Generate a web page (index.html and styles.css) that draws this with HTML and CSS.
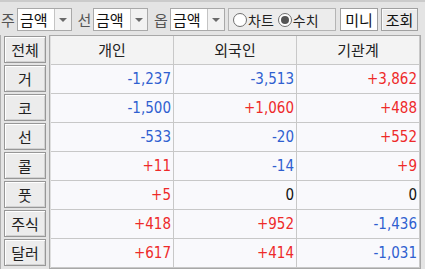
FILE: index.html
```html
<!DOCTYPE html>
<html lang="ko">
<head>
  <meta charset="UTF-8">
  <title>투자자별 매매동향</title>
  <link rel="stylesheet" href="styles.css">
</head>
<body>
  <div class="toolbar">
    <span class="lbl">주</span>
    <div class="combo"><span class="combo-text">금액</span><span class="combo-arrow"></span></div>
    <span class="lbl lbl-mid">선</span>
    <div class="combo"><span class="combo-text">금액</span><span class="combo-arrow"></span></div>
    <span class="lbl lbl-opt">옵</span>
    <div class="combo"><span class="combo-text">금액</span><span class="combo-arrow"></span></div>

    <div class="radio-box">
      <label class="radio"><span class="dot"></span>차트</label>
      <label class="radio"><span class="dot on"></span>수치</label>
    </div>

    <button class="btn btn-mini">미니</button>
    <button class="btn btn-query">조회</button>
  </div>

  <div class="board">
    <div class="side">
      <button class="side-btn">전체</button>
      <button class="side-btn">거</button>
      <button class="side-btn">코</button>
      <button class="side-btn">선</button>
      <button class="side-btn">콜</button>
      <button class="side-btn">풋</button>
      <button class="side-btn">주식</button>
      <button class="side-btn">달러</button>
    </div>

    <div class="grid">
      <div class="cell head">개인</div>
      <div class="cell head">외국인</div>
      <div class="cell head">기관계</div>

      <div class="cell num down">-1,237</div>
      <div class="cell num down">-3,513</div>
      <div class="cell num up">+3,862</div>

      <div class="cell num down">-1,500</div>
      <div class="cell num up">+1,060</div>
      <div class="cell num up">+488</div>

      <div class="cell num down">-533</div>
      <div class="cell num down">-20</div>
      <div class="cell num up">+552</div>

      <div class="cell num up">+11</div>
      <div class="cell num down">-14</div>
      <div class="cell num up">+9</div>

      <div class="cell num up">+5</div>
      <div class="cell num">0</div>
      <div class="cell num">0</div>

      <div class="cell num up">+418</div>
      <div class="cell num up">+952</div>
      <div class="cell num down">-1,436</div>

      <div class="cell num up">+617</div>
      <div class="cell num up">+414</div>
      <div class="cell num down">-1,031</div>
    </div>
  </div>
</body>
</html>
```

FILE: styles.css
```css
body {
  margin: 0;
  width: 425px;
  height: 269px;
  overflow: hidden;
  background: #e4e4e4;
  font-family: "Noto Sans CJK KR", "DejaVu Sans", sans-serif;
  font-size: 15px;
  color: #222;
}

.toolbar {
  display: flex;
  align-items: flex-start;
  height: 35px;
  box-sizing: border-box;
  border-top: 2px solid #cbcbcb;
  padding: 6px 0 0 1px;
}

.lbl {
  width: 16px;
  height: 23px;
  line-height: 23px;
  color: #555;
  text-align: left;
}

.lbl-mid {
  width: 17px;
  margin-left: 4px;
  text-align: center;
}

.lbl-opt {
  width: 18px;
  margin-left: 4px;
  text-align: center;
}

.combo {
  display: flex;
  width: 55px;
  height: 23px;
  box-sizing: border-box;
  border: 1px solid #a9a9a9;
  background: #fff;
}

.combo-text {
  flex: 1;
  line-height: 21px;
  padding-left: 2px;
  color: #111;
}

.combo-arrow {
  width: 16px;
  border-left: 1px solid #c4c4c4;
  background: #f2f2f2;
  position: relative;
}

.combo-arrow::after {
  content: "";
  position: absolute;
  left: 4px;
  top: 9px;
  border-left: 4px solid transparent;
  border-right: 4px solid transparent;
  border-top: 4px solid #6a6a6a;
}

.radio-box {
  display: flex;
  align-items: center;
  width: 108px;
  height: 23px;
  box-sizing: border-box;
  margin-left: 3px;
  padding-left: 4px;
  border: 1px solid #b4b4b4;
  background: #ececec;
  font-size: 14px;
}

.radio {
  display: flex;
  align-items: center;
  color: #222;
  margin-right: 4px;
}

.dot {
  width: 12px;
  height: 12px;
  border: 1px solid #707070;
  border-radius: 50%;
  background: #fff;
  margin-right: 1px;
  position: relative;
}

.dot.on::after {
  content: "";
  position: absolute;
  left: 2px;
  top: 2px;
  width: 8px;
  height: 8px;
  border-radius: 50%;
  background: #555;
}

.btn {
  height: 23px;
  box-sizing: border-box;
  padding: 0;
  border: 1px solid #a0a0a0;
  font-family: inherit;
  font-size: 15px;
  color: #111;
}

.btn-mini {
  width: 38px;
  margin-left: 4px;
  background: #fff;
}

.btn-query {
  width: 37px;
  margin-left: 3px;
  background: #ebebeb;
  box-shadow: inset 1px 1px 0 #fafafa;
}

.board {
  display: flex;
  height: 234px;
  box-sizing: border-box;
  border-left: 1px solid #b0b0b0;
  padding: 1px 0 0 3px;
}

.side {
  display: flex;
  flex-direction: column;
  width: 42px;
}

.side-btn {
  height: 27px;
  margin-bottom: 2px;
  padding: 0;
  border: 1px solid #979797;
  background: #ececec;
  box-shadow: inset 1px 1px 0 #fff, inset -1px -1px 0 #d2d2d2;
  font-family: inherit;
  font-size: 15px;
  color: #222;
}

.grid {
  display: grid;
  grid-template-columns: 123px 123px 123px;
  grid-auto-rows: 29px;
  align-self: flex-start;
  margin: -1px 0 0 3px;
  border: 1px solid #a8a8a8;
  padding-left: 1px;
  background: #f9f9fc;
  box-shadow: inset 1px 0 0 #dedede;
}

.cell {
  box-sizing: border-box;
  border-right: 1px solid #c8c8c8;
  border-bottom: 1px solid #c8c8c8;
  line-height: 28px;
}

.head {
  background: #f3f3f3;
  text-align: center;
  color: #222;
}

.num {
  text-align: right;
  padding-right: 2px;
  font-family: "Liberation Sans Narrow", "DejaVu Sans Condensed", "Liberation Sans", sans-serif;
  font-size: 15px;
  color: #111;
}

.up {
  color: #ee2a2a;
}

.down {
  color: #2f5fd0;
}
```
